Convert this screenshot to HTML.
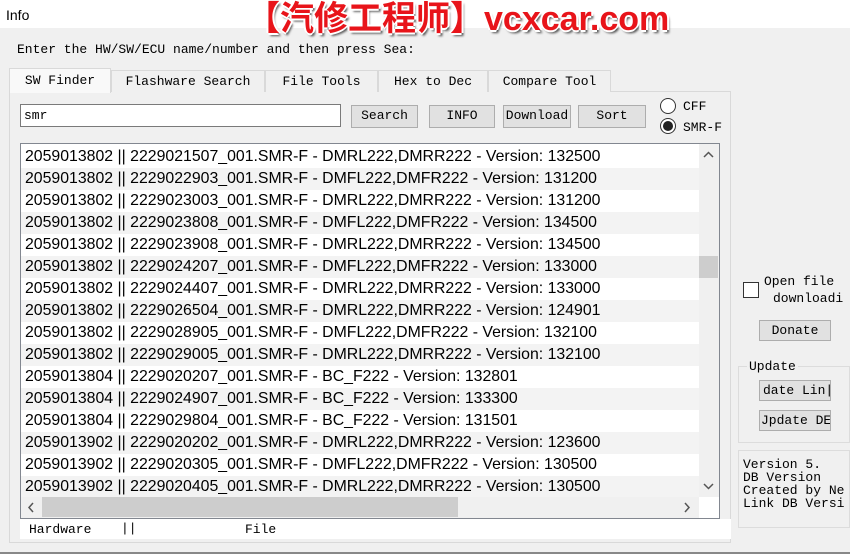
<!DOCTYPE html>
<html><head><meta charset="utf-8"><style>
*{box-sizing:border-box;margin:0;padding:0}
body{width:850px;height:554px;background:#f0f0f0;position:relative;overflow:hidden;font-family:"Liberation Mono","Noto Sans CJK SC",monospace;font-size:13px;color:#000}
.abs{position:absolute}
.title{left:0;top:0;width:850px;height:28px;background:#fff}
.wm{left:246px;top:-1px;font-family:"Liberation Sans","Noto Sans CJK SC",sans-serif;font-weight:bold;font-size:34px;color:#e8141a;white-space:nowrap;text-shadow:-2px 0 #fff,2px 0 #fff,0 -2px #fff,0 2px #fff,2px 3px 2px #555;line-height:40px}
.btn{background:#e1e1e1;border:1px solid #adadad;text-align:center;line-height:20px;height:23px;white-space:nowrap;overflow:hidden}
.tab{top:70px;height:22px;border:1px solid #d9d9d9;border-bottom:none;background:#f0f0f0;text-align:center;line-height:21px}
.list{left:20px;top:143px;width:700px;height:376px;background:#fff;border:1px solid #828790;overflow:hidden;padding-top:2px}
.row{height:22px;line-height:22px;padding-left:4px;font-family:"Liberation Sans",sans-serif;font-size:15.85px;white-space:nowrap;width:678px;overflow:hidden}
.row:nth-child(even){background:#f3f3f3}
.rad{width:16px;height:16px;border:1px solid #333;border-radius:50%;background:#fff}
</style></head><body>
<div class="abs title"></div>
<div class="abs" style="left:6px;top:7px;font-family:'Liberation Sans',sans-serif;font-size:14px">Info</div>
<div class="abs wm">【汽修工程师】vcxcar.com</div>
<div class="abs" style="left:17px;top:42px">Enter the HW/SW/ECU name/number and then press Sea:</div>
<div class="abs" style="left:9px;top:91px;width:722px;height:452px;border:1px solid #d9d9d9;background:#f0f0f0"></div>
<div class="abs tab" style="left:111px;width:154px">Flashware Search</div>
<div class="abs tab" style="left:265px;width:113px">File Tools</div>
<div class="abs tab" style="left:378px;width:110px">Hex to Dec</div>
<div class="abs tab" style="left:488px;width:123px">Compare Tool</div>
<div class="abs tab" style="left:9px;top:68px;width:102px;height:25px;background:#f9f9f9;line-height:24px">SW Finder</div>
<div class="abs" style="left:20px;top:104px;width:321px;height:23px;background:#fff;border:1px solid #7a7a7a;padding-left:3px;line-height:21px">smr</div>
<div class="abs btn" style="left:351px;top:105px;width:67px">Search</div>
<div class="abs btn" style="left:429px;top:105px;width:66px">INFO</div>
<div class="abs btn" style="left:503px;top:105px;width:68px">Download</div>
<div class="abs btn" style="left:578px;top:105px;width:68px">Sort</div>
<div class="abs rad" style="left:660px;top:98px"></div>
<div class="abs" style="left:683px;top:99px">CFF</div>
<div class="abs rad" style="left:660px;top:118px"><div style="width:10px;height:10px;border-radius:50%;background:#222;margin:2px"></div></div>
<div class="abs" style="left:683px;top:120px">SMR-F</div>
<div class="abs list">
<div class="row">2059013802 || 2229021507_001.SMR-F - DMRL222,DMRR222 - Version: 132500</div>
<div class="row">2059013802 || 2229022903_001.SMR-F - DMFL222,DMFR222 - Version: 131200</div>
<div class="row">2059013802 || 2229023003_001.SMR-F - DMRL222,DMRR222 - Version: 131200</div>
<div class="row">2059013802 || 2229023808_001.SMR-F - DMFL222,DMFR222 - Version: 134500</div>
<div class="row">2059013802 || 2229023908_001.SMR-F - DMRL222,DMRR222 - Version: 134500</div>
<div class="row">2059013802 || 2229024207_001.SMR-F - DMFL222,DMFR222 - Version: 133000</div>
<div class="row">2059013802 || 2229024407_001.SMR-F - DMRL222,DMRR222 - Version: 133000</div>
<div class="row">2059013802 || 2229026504_001.SMR-F - DMRL222,DMRR222 - Version: 124901</div>
<div class="row">2059013802 || 2229028905_001.SMR-F - DMFL222,DMFR222 - Version: 132100</div>
<div class="row">2059013802 || 2229029005_001.SMR-F - DMRL222,DMRR222 - Version: 132100</div>
<div class="row">2059013804 || 2229020207_001.SMR-F - BC_F222 - Version: 132801</div>
<div class="row">2059013804 || 2229024907_001.SMR-F - BC_F222 - Version: 133300</div>
<div class="row">2059013804 || 2229029804_001.SMR-F - BC_F222 - Version: 131501</div>
<div class="row">2059013902 || 2229020202_001.SMR-F - DMRL222,DMRR222 - Version: 123600</div>
<div class="row">2059013902 || 2229020305_001.SMR-F - DMFL222,DMFR222 - Version: 130500</div>
<div class="row">2059013902 || 2229020405_001.SMR-F - DMRL222,DMRR222 - Version: 130500</div>
</div>
<div class="abs" style="left:699px;top:144px;width:20px;height:353px;background:#f0f0f0"></div>
<svg class="abs" style="left:699px;top:144px" width="20" height="353"><path d="M5 13 L9.5 8.5 L14 13" stroke="#555" stroke-width="1.5" fill="none"/><path d="M5 340 L9.5 344.5 L14 340" stroke="#555" stroke-width="1.5" fill="none"/></svg>
<div class="abs" style="left:699px;top:256px;width:19px;height:22px;background:#cdcdcd"></div>
<div class="abs" style="left:21px;top:497px;width:678px;height:21px;background:#f0f0f0"></div>
<div class="abs" style="left:42px;top:497px;width:416px;height:20px;background:#cdcdcd"></div>
<svg class="abs" style="left:21px;top:497px" width="678" height="21"><path d="M12 6 L8 10.5 L12 15" stroke="#555" stroke-width="1.5" fill="none"/><path d="M664 6 L668 10.5 L664 15" stroke="#555" stroke-width="1.5" fill="none"/></svg>
<div class="abs" style="left:20px;top:519px;width:711px;height:20px;background:#fff"></div>
<div class="abs" style="left:29px;top:522px">Hardware</div>
<div class="abs" style="left:121px;top:521px">||</div>
<div class="abs" style="left:245px;top:522px">File</div>
<div class="abs" style="left:743px;top:282px;width:16px;height:16px;border:1px solid #333;background:#fff"></div>
<div class="abs" style="left:764px;top:274px">Open file</div>
<div class="abs" style="left:773px;top:291px">downloadi</div>
<div class="abs btn" style="left:759px;top:320px;width:72px;height:21px;line-height:19px">Donate</div>
<div class="abs" style="left:738px;top:366px;width:112px;height:77px;border:1px solid #dcdcdc"></div>
<div class="abs" style="left:747px;top:359px;background:#f0f0f0;padding:0 2px">Update</div>
<div class="abs btn" style="left:759px;top:380px;width:72px;height:21px;line-height:19px;text-align:left;padding-left:3px">date Lin|</div>
<div class="abs btn" style="left:759px;top:410px;width:72px;height:21px;line-height:19px;text-align:left;padding-left:1px">Jpdate DE</div>
<div class="abs" style="left:738px;top:450px;width:112px;height:78px;border:1px solid #dcdcdc;padding:7px 0 0 4px;line-height:13px;white-space:nowrap;overflow:hidden">Version 5.<br>DB Version<br>Created by Ne<br>Link DB Versi</div>
<div class="abs" style="left:0;top:552px;width:850px;height:2px;background:#888"></div>
</body></html>
